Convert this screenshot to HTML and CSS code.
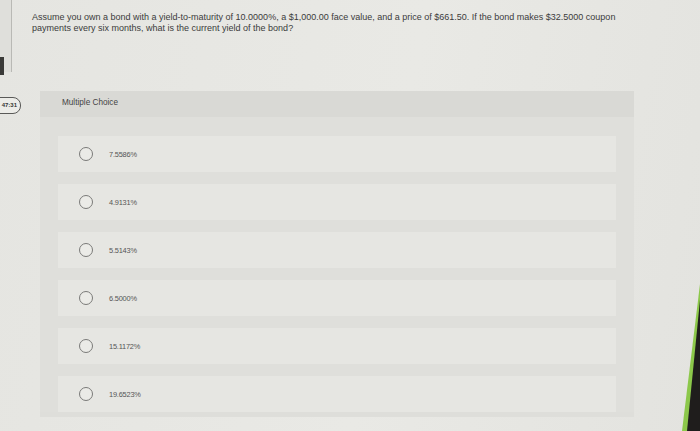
FILE: index.html
```html
<!DOCTYPE html>
<html lang="en">
<head>
<meta charset="utf-8">
<title>Multiple Choice</title>
<link rel="stylesheet" href="styles.css">
</head>
<body>
<div class="screen">
  <aside class="rail">
    <div class="rail-frame"><span class="rail-mark"></span></div>
    <div class="timer">47:31</div>
  </aside>
  <main class="content">
    <p class="question">Assume you own a bond with a yield-to-maturity of 10.0000%, a $1,000.00 face value, and a price of $661.50. If the bond makes $32.5000 coupon payments every six months, what is the current yield of the bond?</p>
    <section class="panel">
      <header class="panel-head">Multiple Choice</header>
      <ul class="options">
        <li class="option"><span class="radio"></span><span class="label">7.5586%</span></li>
        <li class="option"><span class="radio"></span><span class="label">4.9131%</span></li>
        <li class="option"><span class="radio"></span><span class="label">5.5143%</span></li>
        <li class="option"><span class="radio"></span><span class="label">6.5000%</span></li>
        <li class="option"><span class="radio"></span><span class="label">15.1172%</span></li>
        <li class="option"><span class="radio"></span><span class="label">19.6523%</span></li>
      </ul>
    </section>
  </main>
  <div class="bezel"></div>
</div>
</body>
</html>
```
FILE: styles.css
```css
* { box-sizing: border-box; }
html, body { margin: 0; padding: 0; }
body {
  width: 700px;
  height: 431px;
  overflow: hidden;
  font-family: "Liberation Sans", Arial, sans-serif;
  background: linear-gradient(100deg, #e5e5e1 0%, #e9e9e5 55%, #e3e3df 100%);
}
.screen {
  position: relative;
  display: flex;
  width: 700px;
  height: 431px;
}
.rail {
  width: 12px;
  flex: none;
  display: flex;
  flex-direction: column;
}
.rail-frame {
  height: 72px;
  border-right: 1.5px solid #b9b9b5;
  background: #dfdfdb;
  display: flex;
  flex-direction: column;
  justify-content: flex-end;
}
.rail-mark {
  display: block;
  width: 4px;
  height: 18px;
  margin-bottom: -3px;
  background: #3a3a38;
}
.timer {
  margin-top: 25px;
  margin-left: -8px;
  width: 29px;
  height: 17px;
  border: 1px solid #5a5a58;
  border-radius: 8px;
  font-size: 6px;
  font-weight: bold;
  color: #333;
  line-height: 15px;
  text-align: right;
  padding-right: 3px;
  background: #ecece8;
  white-space: nowrap;
}
.content {
  flex: 1;
  padding: 12px 0 0 20px;
}
.question {
  margin: 0;
  width: 596px;
  font-size: 9px;
  line-height: 11px;
  color: #3b3b3b;
}
.panel {
  margin: 57px 0 0 8px;
  width: 594px;
  background: #dededa;
  padding-bottom: 5px;
}
.panel-head {
  height: 26px;
  padding: 7px 0 0 22px;
  font-size: 8.2px;
  line-height: 9px;
  color: #444;
  background: #d9d9d5;
}
.options {
  list-style: none;
  margin: 0;
  padding: 19px 18px 0 18px;
  display: flex;
  flex-direction: column;
  gap: 12px;
  background: #dfdfdb;
}
.option {
  height: 36px;
  display: flex;
  align-items: center;
  padding-left: 21px;
  background: #e6e6e2;
}
.radio {
  width: 14px;
  height: 14px;
  border: 1px solid #7a7a78;
  border-radius: 50%;
  background: #ebebe7;
  flex: none;
}
.label {
  margin-left: 16px;
  font-size: 7.4px;
  color: #555;
  letter-spacing: -0.2px;
}
.bezel {
  position: absolute;
  left: 0;
  top: 0;
  width: 700px;
  height: 431px;
  pointer-events: none;
  background: #8cc84a;
  clip-path: polygon(700px 284px, 700px 431px, 682px 431px);
}
.bezel::before {
  content: "";
  position: absolute;
  inset: 0;
  background: #1f1d1c;
  clip-path: polygon(700px 300px, 700px 431px, 687px 431px);
}
```
